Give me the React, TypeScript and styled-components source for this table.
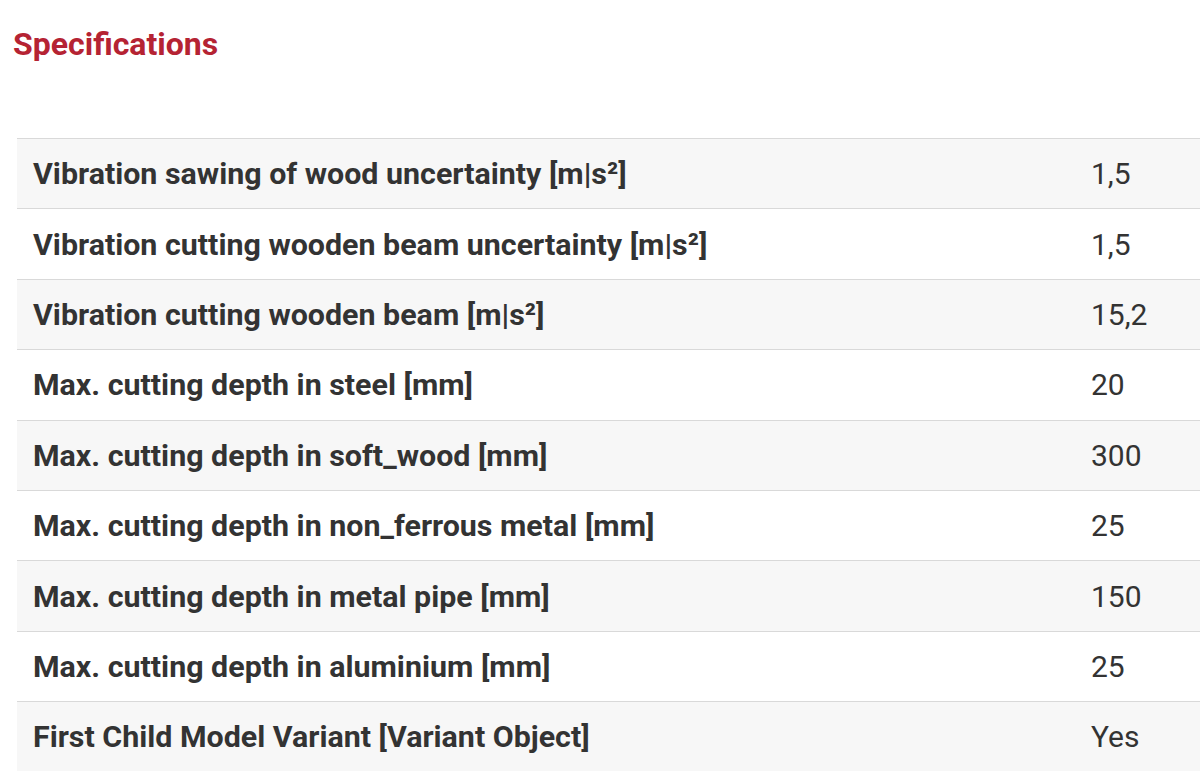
import React from "react";
import styled, { createGlobalStyle } from "styled-components";

const Global = createGlobalStyle`
  html, body { margin: 0; padding: 0; background: #fff; }
  body { font-family: Roboto, "Liberation Sans", Arial, sans-serif; }
`;

const Page = styled.div`
  padding: 24px 0 0 13px;
  overflow: hidden;
`;

const Heading = styled.h2`
  margin: 0;
  font-size: 32px;
  line-height: 40px;
  font-weight: 700;
  color: #b52333;
`;

const Table = styled.div`
  margin-top: 74px;
  margin-left: 4px;
  border-top: 1px solid #d9d9d9;
`;

const Row = styled.div<{ $shaded: boolean }>`
  display: grid;
  grid-template-columns: 1059px 1fr;
  align-items: center;
  height: 69.4px;
  border-bottom: 1px solid #d9d9d9;
  background: ${(p) => (p.$shaded ? "#f7f7f7" : "#ffffff")};
`;

const Label = styled.div`
  padding-left: 16px;
  font-size: 30.4px;
  font-weight: 700;
  color: #333;
  white-space: nowrap;
`;

const Value = styled.div`
  padding-left: 15px;
  font-size: 30px;
  font-weight: 400;
  color: #333;
  white-space: nowrap;
`;

const rows: [string, string][] = [
  ["Vibration sawing of wood uncertainty [m|s²]", "1,5"],
  ["Vibration cutting wooden beam uncertainty [m|s²]", "1,5"],
  ["Vibration cutting wooden beam [m|s²]", "15,2"],
  ["Max. cutting depth in steel [mm]", "20"],
  ["Max. cutting depth in soft_wood [mm]", "300"],
  ["Max. cutting depth in non_ferrous metal [mm]", "25"],
  ["Max. cutting depth in metal pipe [mm]", "150"],
  ["Max. cutting depth in aluminium [mm]", "25"],
  ["First Child Model Variant [Variant Object]", "Yes"],
];

export default function App() {
  return (
    <>
      <Global />
      <Page>
        <Heading>Specifications</Heading>
        <Table>
          {rows.map(([l, v], i) => (
            <Row key={i} $shaded={i % 2 === 0}>
              <Label>{l}</Label>
              <Value>{v}</Value>
            </Row>
          ))}
        </Table>
      </Page>
    </>
  );
}
